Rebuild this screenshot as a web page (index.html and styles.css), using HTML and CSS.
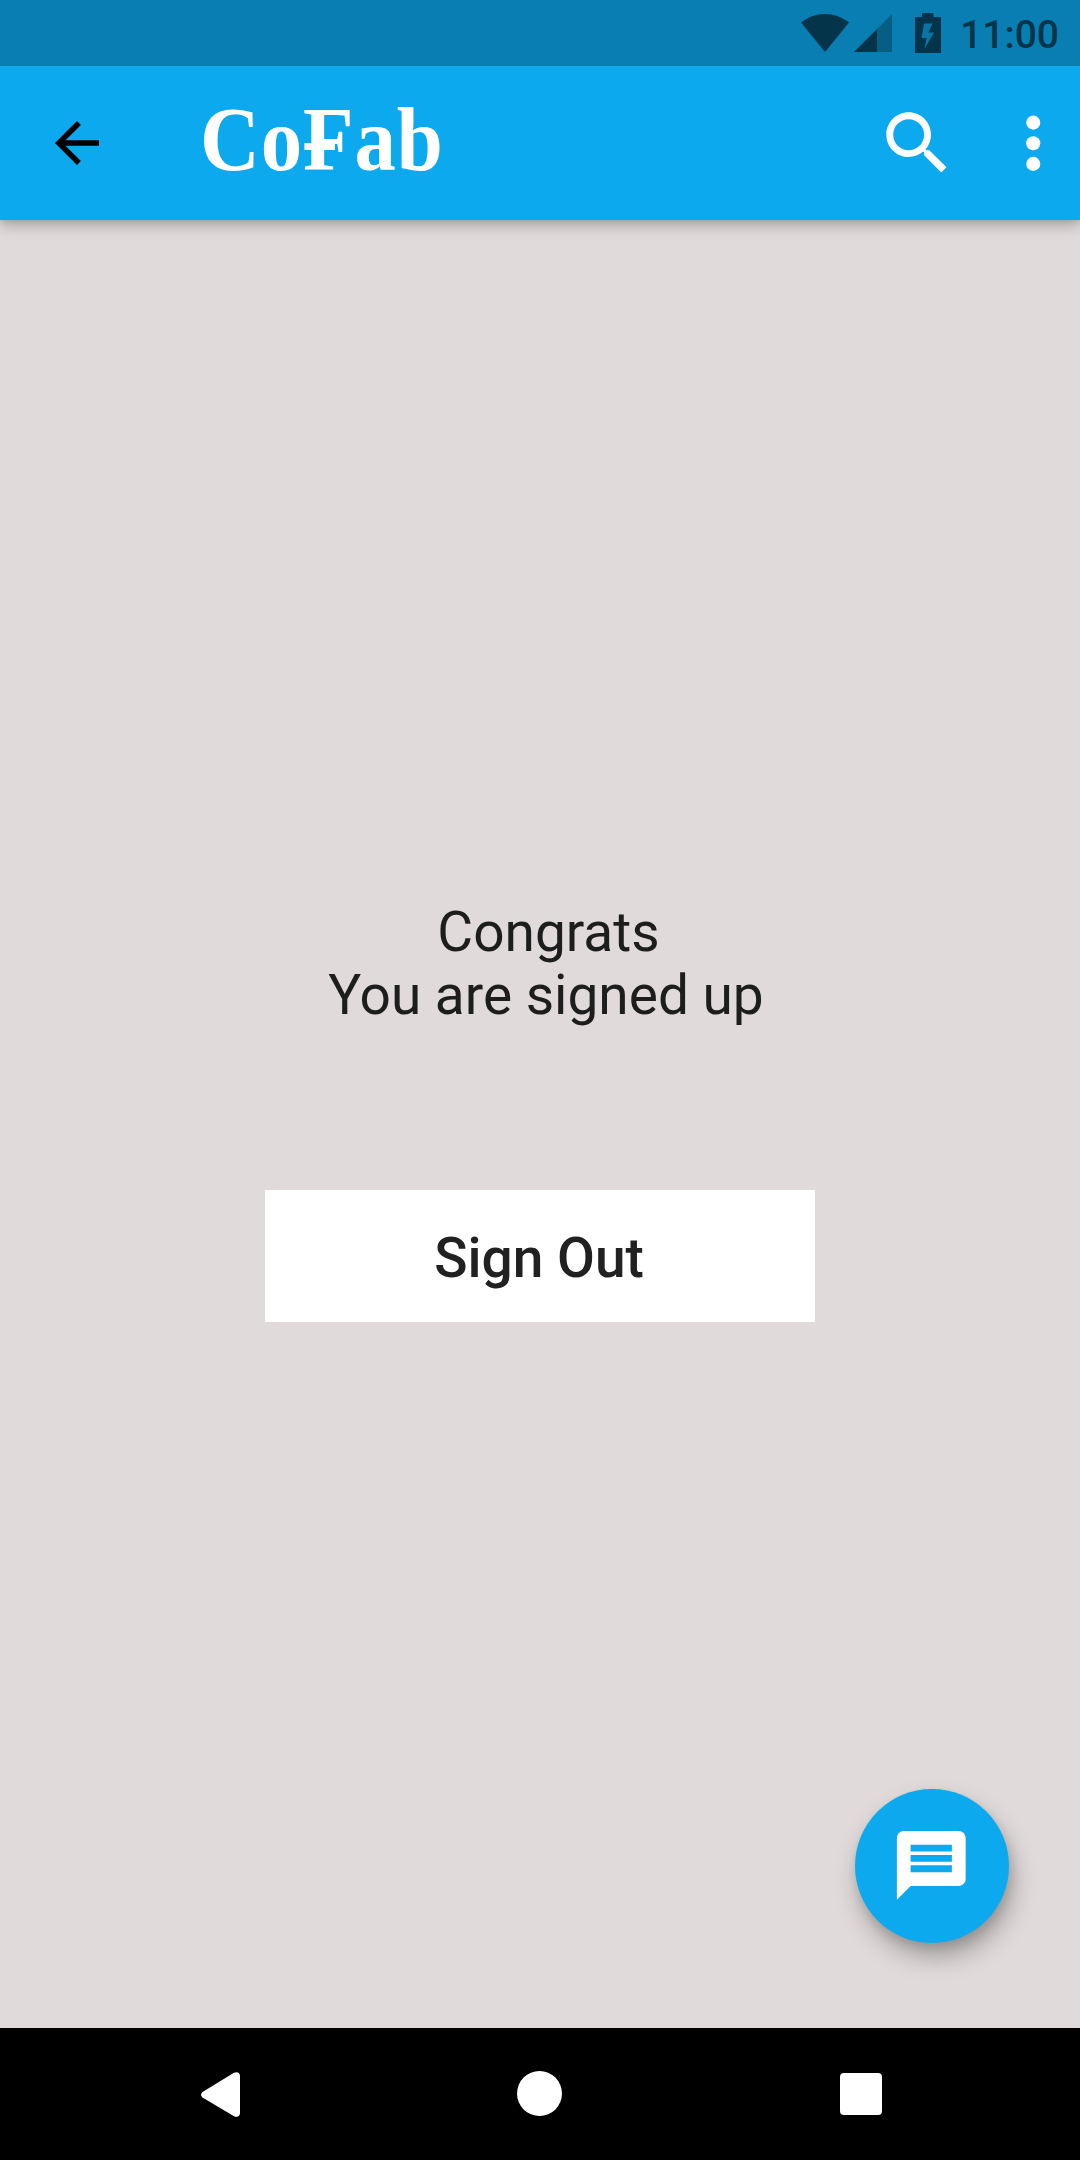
FILE: index.html
```
<!DOCTYPE html>
<html lang="en">
<head>
<meta charset="utf-8">
<title>CoFab</title>
<link rel="stylesheet" href="styles.css">
</head>
<body>
<div class="screen">
  <div class="status-bar">
    <svg class="wifi" width="48" height="38" viewBox="0 0 48 38"><path d="M0 8.6C7 3 15 0 24 0s17 3 24 8.6L24 38z"/></svg>
    <svg class="signal" width="38" height="38" viewBox="0 0 38 38"><path class="faint" d="M38 0v38H23V15z"/><path d="M0 38 23 15v23z"/></svg>
    <svg class="battery" width="26" height="40" viewBox="0 0 26 40"><path d="M7 0h11.500v4H26v36H0V4h7z"/><path class="faint" d="M9 10.500 6.500 25h5L9.500 36 19 19.500h-5.500L17.500 10.500z"/></svg>
    <span class="time">11:00</span>
  </div>
  <header class="app-bar">
    <svg class="back" width="66" height="66" viewBox="0 0 24 24"><path d="M20 11H7.830l5.590-5.590L12 4l-8 8 8 8 1.410-1.410L7.830 13H20v-2z"/></svg>
    <h1 class="brand">Co<span class="barred">F</span>ab</h1>
    <svg class="search" width="82.500" height="82.500" viewBox="0 0 24 24"><path d="M15.500 14h-.79l-.28-.27C15.410 12.590 16 11.110 16 9.500 16 5.910 13.090 3 9.500 3S3 5.910 3 9.500 5.910 16 9.500 16c1.610 0 3.090-.59 4.230-1.570l.27.28v.79l5 4.990L20.490 19l-4.990-5zm-6 0C7.010 14 5 11.990 5 9.500S7.010 5 9.500 5 14 7.010 14 9.500 11.990 14 9.500 14z"/></svg>
    <svg class="more" width="82.500" height="82.500" viewBox="0 0 24 24"><circle cx="12" cy="6" r="2.050"/><circle cx="12" cy="12" r="2.050"/><circle cx="12" cy="18" r="2.050"/></svg>
  </header>
  <main class="content">
    <p class="message"><span class="congrats">Congrats</span><br>You are signed up</p>
    <button class="sign-out">Sign Out</button>
  </main>
  <nav class="nav-bar">
    <svg class="nav-back" width="39" height="45" viewBox="0 0 39 45"><path d="M1.500 20 33 .8Q38.500-1.200 39 4v37q-.5 5.200-6 3.200L1.500 25.500q-3-2.700 0-5.500z"/></svg>
    <span class="nav-home"></span>
    <span class="nav-recent"></span>
  </nav>
  <button class="fab" aria-label="Messages">
    <svg width="82.500" height="82.500" viewBox="0 0 24 24"><path d="M20 2H4c-1.100 0-1.990.9-1.990 2L2 22l4-4h14c1.100 0 2-.9 2-2V4c0-1.100-.9-2-2-2zm-2 12H6v-2h12v2zm0-3H6V9h12v2zm0-3H6V6h12v2z"/></svg>
  </button>
</div>
</body>
</html>
```
FILE: styles.css
```
* { box-sizing: border-box; }
body { margin: 0; font-family: Roboto, "Liberation Sans", sans-serif; }
svg { display: block; flex: none; }
button { border: 0; font-family: inherit; }
.screen {
  position: relative;
  display: flex;
  flex-direction: column;
  width: 1080px;
  height: 2160px;
  overflow: hidden;
  background: #e0dada;
}
.status-bar {
  position: relative;
  z-index: 1;
  display: flex;
  justify-content: flex-end;
  height: 66px;
  padding: 13px 21px 0 0;
  background: #087eb2;
  fill: #043449;
  color: #043449;
}
.wifi { margin: 1px 5px 0 0; }
.signal { margin: 1px 23px 0 0; }
.battery { margin-right: 19px; }
.faint { fill: #065e84; }
.battery .faint { fill: #0774a3; }
.time { font-size: 39px; line-height: 45px; font-weight: 500; }
.app-bar {
  position: relative;
  display: flex;
  align-items: center;
  height: 154px;
  padding-left: 44px;
  background: #0da9ee;
  fill: #fff;
  box-shadow: 0 5px 14px rgba(0, 0, 0, .25), 0 1px 5px rgba(0, 0, 0, .1);
}
.back { fill: #000; }
.brand {
  flex: 1;
  margin: 0 0 8px 90px;
  color: #fff;
  font: bold 92px/146px "Liberation Serif", serif;
  letter-spacing: 1px;
  transform: scaleX(.9);
  transform-origin: left;
}
/* the crossbar of the F runs through its stem */
.barred {
  background: linear-gradient(#fff, #fff) 2px 58% / 34px 7px no-repeat;
}
.search { margin-right: 33px; }
.more { margin-right: 6px; }
.content {
  display: flex;
  flex: 1;
  flex-direction: column;
  align-items: center;
  padding-top: 681px;
}
.message {
  margin: 0 0 163px 12px;
  color: #1d1d1d;
  font-size: 55px;
  line-height: 63px;
  text-align: center;
}
.congrats { padding-left: 5px; }
.sign-out {
  width: 550px;
  height: 132px;
  padding: 3px 2px 0 0;
  background: #fff;
  color: #212121;
  font-size: 55px;
  font-weight: 500;
}
.nav-bar {
  display: flex;
  align-items: center;
  height: 132px;
  padding-left: 201px;
  background: #000;
  fill: #fff;
}
.nav-home {
  width: 45px;
  height: 45px;
  margin: 0 278px 1px 277px;
  border-radius: 50%;
  background: #fff;
}
.nav-recent {
  width: 42px;
  height: 42px;
  border-radius: 4px;
  background: #fff;
}
.fab {
  position: absolute;
  left: 854.500px;
  top: 1788.500px;
  display: flex;
  align-items: center;
  justify-content: center;
  width: 154px;
  height: 154px;
  padding: 0;
  border-radius: 50%;
  background: #0da9ee;
  fill: #fff;
  box-shadow: 4px 14px 24px rgba(0, 0, 0, .28), 2px 5px 10px rgba(0, 0, 0, .1);
}
```
